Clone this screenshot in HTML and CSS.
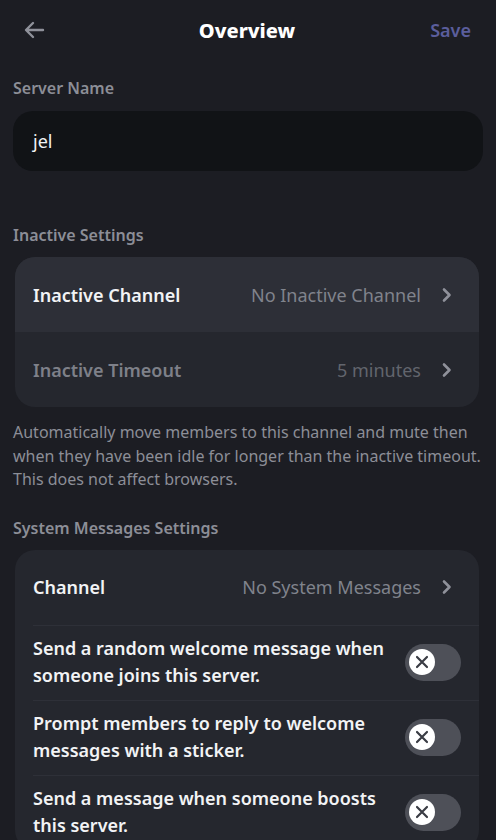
FILE: index.html
```html
<!DOCTYPE html>
<html lang="en">
<head>
<meta charset="utf-8">
<title>Overview</title>
<link rel="stylesheet" href="styles.css">
</head>
<body>
<div class="page">
  <header class="topbar">
    <button class="back" aria-label="Back">
      <svg width="24" height="24" viewBox="0 0 24 24"><path d="M21 12H4.5M11 5l-7 7 7 7" fill="none" stroke="currentColor" stroke-width="2.4" stroke-linecap="round" stroke-linejoin="round"/></svg>
    </button>
    <h1 class="title">Overview</h1>
    <span class="save">Save</span>
  </header>

  <div class="label">Server Name</div>
  <div class="input">jel</div>

  <div class="label section">Inactive Settings</div>
  <div class="card">
    <div class="row active">
      <span class="row-title">Inactive Channel</span>
      <span class="row-value">No Inactive Channel</span>
      <svg class="chev" width="12" height="16" viewBox="0 0 12 16"><path d="M3 2.5l5.5 5.5L3 13.5" fill="none" stroke="currentColor" stroke-width="2.6" stroke-linecap="round" stroke-linejoin="round"/></svg>
    </div>
    <div class="row dim">
      <span class="row-title">Inactive Timeout</span>
      <span class="row-value">5 minutes</span>
      <svg class="chev" width="12" height="16" viewBox="0 0 12 16"><path d="M3 2.5l5.5 5.5L3 13.5" fill="none" stroke="currentColor" stroke-width="2.6" stroke-linecap="round" stroke-linejoin="round"/></svg>
    </div>
  </div>
  <p class="desc">Automatically move members to this channel and mute then when they have been idle for longer than the inactive timeout. This does not affect browsers.</p>

  <div class="label section2">System Messages Settings</div>
  <div class="card">
    <div class="row">
      <span class="row-title">Channel</span>
      <span class="row-value">No System Messages</span>
      <svg class="chev" width="12" height="16" viewBox="0 0 12 16"><path d="M3 2.5l5.5 5.5L3 13.5" fill="none" stroke="currentColor" stroke-width="2.6" stroke-linecap="round" stroke-linejoin="round"/></svg>
    </div>
    <div class="row toggle-row">
      <span class="row-text">Send a random welcome message when someone joins this server.</span>
      <span class="toggle"><span class="knob"><svg width="16" height="16" viewBox="0 0 16 16"><path d="M3 3l10 10M13 3L3 13" stroke="#3a3c44" stroke-width="2.2" stroke-linecap="round"/></svg></span></span>
    </div>
    <div class="row toggle-row">
      <span class="row-text">Prompt members to reply to welcome messages with a sticker.</span>
      <span class="toggle"><span class="knob"><svg width="16" height="16" viewBox="0 0 16 16"><path d="M3 3l10 10M13 3L3 13" stroke="#3a3c44" stroke-width="2.2" stroke-linecap="round"/></svg></span></span>
    </div>
    <div class="row toggle-row">
      <span class="row-text">Send a message when someone boosts this server.</span>
      <span class="toggle"><span class="knob"><svg width="16" height="16" viewBox="0 0 16 16"><path d="M3 3l10 10M13 3L3 13" stroke="#3a3c44" stroke-width="2.2" stroke-linecap="round"/></svg></span></span>
    </div>
  </div>
</div>
</body>
</html>
```

FILE: styles.css
```css
* { box-sizing: border-box; }
html, body {
  margin: 0;
  background: #1c1d23;
  height: 840px;
  overflow: hidden;
}
body {
  font-family: "Noto Sans", "Open Sans", sans-serif;
  color: #f2f3f5;
}
.page {
  padding: 0 15px 0 13px;
}
.topbar {
  height: 60px;
  display: flex;
  align-items: center;
  justify-content: space-between;
  position: relative;
}
.back {
  background: none;
  border: 0;
  padding: 0;
  margin-left: 8px;
  color: #8f919a;
  display: flex;
  width: 26px;
  height: 26px;
  align-items: center;
  justify-content: center;
}
.title {
  position: absolute;
  left: 0;
  right: 0;
  text-align: center;
  margin: 0;
  font-size: 20px;
  font-weight: 800;
  color: #ffffff;
  pointer-events: none;
}
.save {
  font-size: 18px;
  font-weight: 600;
  color: #5b5e9c;
  margin-right: 10px;
}
.label {
  font-size: 16px;
  font-weight: 600;
  color: #8c8e97;
  line-height: 22px;
  margin-top: 17px;
}
.input {
  margin-top: 12px;
  margin-right: -2px;
  height: 60px;
  border-radius: 20px;
  background: #111316;
  display: flex;
  align-items: center;
  padding-left: 20px;
  font-size: 18px;
  color: #f2f3f5;
}
.label.section { margin-top: 53px; }
.label.section2 { margin-top: 25px; }
.card {
  margin: 11px 2px 0 2px;
  background: #25272e;
  border-radius: 20px;
  overflow: hidden;
}
.row {
  min-height: 75px;
  display: flex;
  align-items: center;
  padding: 0 26px 0 18px;
  position: relative;
}
.row + .row::before {
  content: "";
  position: absolute;
  left: 18px;
  right: 0;
  top: 0;
  height: 1px;
  background: #2e3038;
}
.card .row.dim::before { display: none; }
.row.active { background: #2d2f37; }
.row-title {
  font-size: 18px;
  font-weight: 600;
  color: #f2f3f5;
}
.row.dim .row-title { color: #7e8089; }
.row-value {
  margin-left: auto;
  font-size: 18px;
  color: #80838c;
  margin-right: 20px;
}
.row.dim .row-value { color: #62656d; }
.chev { color: #8f919a; }
.desc {
  margin: 14px 0 0 0;
  font-size: 16px;
  line-height: 23.5px;
  color: #8c8e97;
}
.toggle-row { padding-right: 18px; }
.row-text {
  font-size: 18px;
  font-weight: 600;
  line-height: 27px;
  color: #f2f3f5;
  flex: 1;
  padding-right: 16px;
}
.toggle {
  width: 56px;
  height: 37px;
  border-radius: 19px;
  background: #4e5058;
  display: flex;
  align-items: center;
  padding-left: 4px;
  flex: none;
}
.knob {
  width: 26px;
  height: 26px;
  border-radius: 50%;
  background: #ffffff;
  display: flex;
  align-items: center;
  justify-content: center;
}
```
